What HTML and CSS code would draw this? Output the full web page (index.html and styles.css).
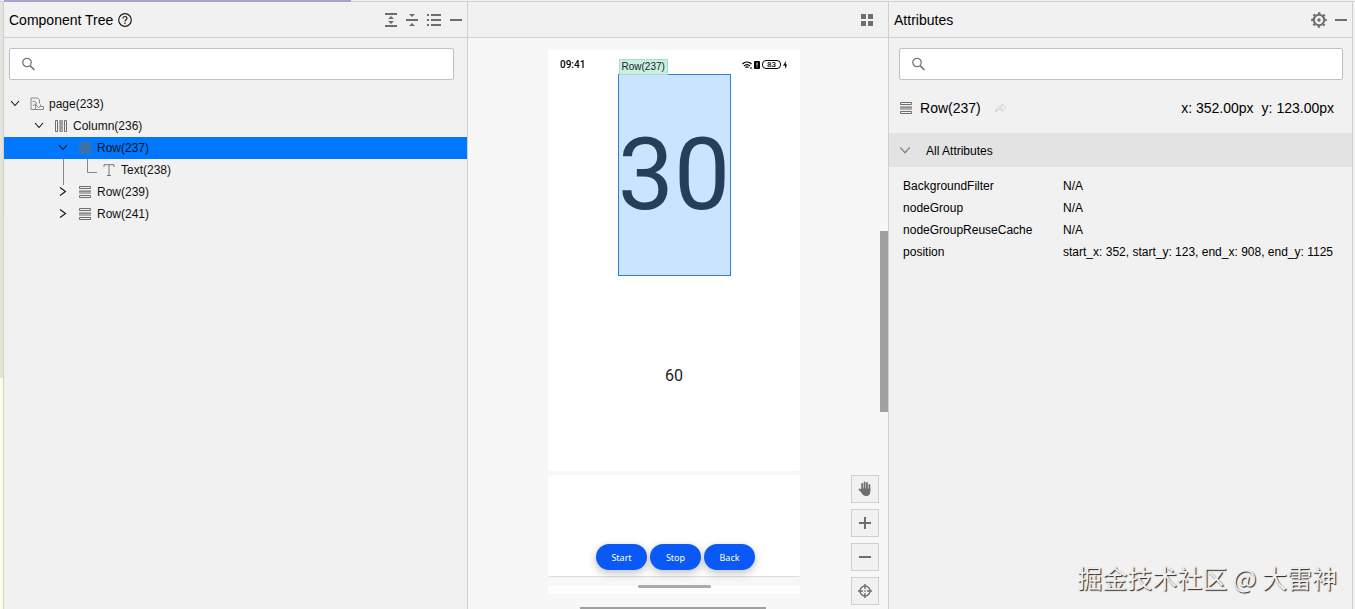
FILE: index.html
```
<!DOCTYPE html>
<html lang="en">
<head>
    <meta charset="utf-8">
    <title>Component Tree</title>
    <meta name="viewport" content="width=device-width, initial-scale=1">
    <link rel="stylesheet" href="styles.css">
</head>
<body>

<!-- shared icons -->
<svg class="sprite" aria-hidden="true">
    <symbol id="search" viewBox="0 0 14 14">
        <circle cx="5" cy="5.500" r="4.200" fill="none" stroke="#777" stroke-width="1.3"/>
        <path d="M8 8.700L12.500 13" stroke="#777" stroke-width="1.7"/>
    </symbol>
    <symbol id="row" viewBox="0 0 12 12">
        <path d="M.5.5h11v2H.5zM.5 9.5h11v2H.5z" fill="none" stroke="#6e6e6e"/>
        <path d="M0 4.5h12v1.2H0zM0 6.4h12v1.2H0z" fill="#6e6e6e"/>
    </symbol>
    <symbol id="down" viewBox="0 0 10 10">
        <path d="M1 2l4 4.500L9 2" fill="none" stroke="currentColor" stroke-width="1.1"/>
    </symbol>
    <symbol id="right" viewBox="0 0 10 10">
        <path d="M2 .5L7.500 4.500 2 8.500" fill="none" stroke="currentColor" stroke-width="1.1"/>
    </symbol>
    <symbol id="minus" viewBox="0 0 12 12">
        <path d="M0 5h12v2H0z" fill="#6e6e6e"/>
    </symbol>
</svg>

<div class="topline"><div class="progress"></div></div>
<div class="window">
    <div class="edge"></div>

    <section class="panel tree-panel">
        <header class="panel-header">
            <h2>Component Tree</h2>
            <button class="icon-btn help" aria-label="Help">
                <svg width="14" height="14" viewBox="0 0 14 14" fill="none" stroke="#222" stroke-width="1.2">
                    <circle cx="7" cy="7" r="6.3"/>
                    <path d="M5 5.5C5 2.9 9 2.9 9 5.3 9 6.8 7 6.8 7 8.5M7 9.5v1.4"/>
                </svg>
            </button>
            <div class="tools">
                <button class="icon-btn" aria-label="Expand all">
                    <svg width="12" height="14" viewBox="0 0 12 14" fill="#6e6e6e">
                        <path d="M0 0h12v2H0zM0 12h12v2H0zM6 3l3 3H3zM6 11L3 8h6z"/>
                    </svg>
                </button>
                <button class="icon-btn" aria-label="Collapse all">
                    <svg width="12" height="14" viewBox="0 0 12 14" fill="#6e6e6e">
                        <path d="M0 6h12v2H0zM3 1h6L6 4zM6 10l3 3H3z"/>
                    </svg>
                </button>
                <button class="icon-btn" aria-label="List">
                    <svg width="14" height="12" viewBox="0 0 14 12" fill="#6e6e6e">
                        <path d="M0 0h2v2H0zM0 5h2v2H0zM0 10h2v2H0zM4 0h10v2H4zM4 5h10v2H4zM4 10h10v2H4z"/>
                    </svg>
                </button>
                <button class="icon-btn" aria-label="Hide component tree">
                    <svg width="12" height="12"><use href="#minus"/></svg>
                </button>
            </div>
        </header>
        <label class="search">
            <svg width="14" height="14"><use href="#search"/></svg>
            <input type="text" aria-label="Search components">
        </label>
        <ul class="tree">
            <li class="node">
                <svg class="arrow" width="10" height="10"><use href="#down"/></svg>
                <svg class="type" width="14" height="14" viewBox="0 0 14 14" fill="none" stroke="#888">
                    <path d="M5 12.500H1V1h6.500L9.500 3v3.500M2.500 4.500c3-.5 4 .5 4 3M3 9c1-2 2.500-2 2.500-2"/>
                    <path d="M5.500 12.500v-5l3 3 2-1V7.500M10.500 9.500h3v3h-8"/>
                </svg>
                page(233)
            </li>
            <li class="node level-1">
                <svg class="arrow" width="10" height="10"><use href="#down"/></svg>
                <svg class="type" width="12" height="12" viewBox="0 0 12 12">
                    <path d="M.5.5h2v11h-2zM9.500.5h2v11h-2z" fill="none" stroke="#6e6e6e"/>
                    <path d="M4.500 0h1.200v12H4.500zM6.400 0h1.200v12H6.400z" fill="#6e6e6e"/>
                </svg>
                Column(236)
            </li>
            <li class="node level-2 selected">
                <svg class="arrow" width="10" height="10"><use href="#down"/></svg>
                <svg class="type" width="12" height="12" viewBox="0 0 12 12">
                    <path d="M0 0h12v12H0z" fill="#2f72b8"/>
                    <path d="M0 .5h12M0 3h12M0 6h12M0 9h12M0 11.500h12" stroke="#4c7294"/>
                </svg>
                Row(237)
            </li>
            <li class="node level-3">
                <svg class="guide" width="34" height="22" viewBox="0 0 34 22" fill="none" stroke="#888">
                    <path d="M.5 0v26M24.500 0v13.500H34"/>
                </svg>
                <svg class="type" width="12" height="12" viewBox="0 0 12 12" fill="none" stroke="#777">
                    <path d="M1 3V.7h10V3M6 .7v10.800M4 11.500h4"/>
                </svg>
                Text(238)
            </li>
            <li class="node level-2">
                <svg class="arrow" width="10" height="10"><use href="#right"/></svg>
                <svg class="type" width="12" height="12"><use href="#row"/></svg>
                Row(239)
            </li>
            <li class="node level-2">
                <svg class="arrow" width="10" height="10"><use href="#right"/></svg>
                <svg class="type" width="12" height="12"><use href="#row"/></svg>
                Row(241)
            </li>
        </ul>
    </section>

    <section class="panel preview-panel">
        <header class="panel-header">
            <div class="tools">
                <button class="icon-btn" aria-label="Layout">
                    <svg width="12" height="12" viewBox="0 0 12 12" fill="#6e6e6e">
                        <path d="M0 0h5v5H0zM7 0h5v5H7zM0 7h5v5H0zM7 7h5v5H7z"/>
                    </svg>
                </button>
            </div>
        </header>
        <div class="canvas">
            <div class="phone">
                <div class="screen">
                    <div class="status">
                        <span>09:41</span>
                        <span class="status-icons">
                            <svg width="10" height="8" viewBox="0 0 10 8" fill="none" stroke="#000" stroke-width="1.200">
                                <path d="M.5 3C3 .3 7 .3 9.500 3M2 5c2-1.800 4-1.800 6 0M3.500 6.500c1-.8 2-.8 3 0"/>
                                <path d="M8 7h2"/>
                            </svg>
                            <svg width="6" height="8" viewBox="0 0 6 8">
                                <rect width="6" height="8" rx="1"/>
                                <path d="M3 1.500v3M3 5.500v1" stroke="#fff"/>
                            </svg>
                            <span class="battery">83</span>
                            <svg width="4" height="8" viewBox="0 0 4 8"><path d="M3 0L0 4.500h2L2.500 8 4 3.500H2.500z"/></svg>
                        </span>
                    </div>
                    <div class="picked">
                        <span class="tag">Row(237)</span>
                        30
                    </div>
                    <div class="counter">60</div>
                </div>
                <div class="screen actions">
                    <button>Start</button>
                    <button>Stop</button>
                    <button>Back</button>
                </div>
                <div class="home"><div class="home-bar"></div></div>
            </div>
            <div class="scroll-y"></div>
            <div class="scroll-x"></div>
            <div class="zoom-bar">
                <button aria-label="Pan">
                    <svg width="14" height="16" viewBox="0 0 14 16" fill="none" stroke="#6e6e6e" stroke-width="1.800" stroke-linecap="round">
                        <path d="M4.200 8V3M6.600 8V1.500M9 8V2M11.400 9V4M4.500 11L1.500 8.500"/>
                        <path d="M3.300 7.500h9v3c0 3-1.500 4.500-4 4.500S4.500 14 2.800 10.500z" fill="#6e6e6e" stroke="none"/>
                    </svg>
                </button>
                <button aria-label="Zoom in">
                    <svg width="12" height="12" viewBox="0 0 12 12" fill="#6e6e6e"><path d="M0 5h5V0h2v5h5v2H7v5H5V7H0z"/></svg>
                </button>
                <button aria-label="Zoom out">
                    <svg width="12" height="12"><use href="#minus"/></svg>
                </button>
                <button aria-label="Center">
                    <svg width="14" height="14" viewBox="0 0 14 14" fill="none" stroke="#6e6e6e" stroke-width="1.400">
                        <circle cx="7" cy="7" r="5"/>
                        <path d="M7 0v5M7 9v5M0 7h5M9 7h5M6.300 7h1.400"/>
                    </svg>
                </button>
            </div>
        </div>
    </section>

    <section class="panel attr-panel">
        <header class="panel-header">
            <h2>Attributes</h2>
            <div class="tools">
                <button class="icon-btn" aria-label="Settings">
                    <svg width="16" height="16" viewBox="0 0 16 16" fill="none" stroke="#6e6e6e">
                        <circle cx="8" cy="8" r="5.200" stroke-width="2"/>
                        <circle cx="8" cy="8" r="6.900" stroke-width="1.800" stroke-dasharray="2.400 3.020" stroke-dashoffset="1.200"/>
                        <circle cx="8" cy="8" r="1.700" fill="#6e6e6e" stroke="none"/>
                    </svg>
                </button>
                <button class="icon-btn" aria-label="Hide attributes">
                    <svg width="12" height="12"><use href="#minus"/></svg>
                </button>
            </div>
        </header>
        <label class="search">
            <svg width="14" height="14"><use href="#search"/></svg>
            <input type="text" aria-label="Search attributes">
        </label>
        <div class="summary">
            <svg width="12" height="12"><use href="#row"/></svg>
            <span>Row(237)</span>
            <svg class="jump" width="12" height="10" viewBox="0 0 12 10" fill="none" stroke="#d2d2d2">
                <path d="M7 3V.8L11.300 4.500 7 8.200V6C4 6 2 7 .6 9 1 5.500 3.500 3 7 3zM1 8l6-3.500"/>
            </svg>
            <span class="pos">x: 352.00px</span>
            <span>y: 123.00px</span>
        </div>
        <div class="group">
            <svg width="12" height="12"><use href="#down"/></svg>
            All Attributes
        </div>
        <table class="attrs">
            <tr><th scope="row">BackgroundFilter</th><td>N/A</td></tr>
            <tr><th scope="row">nodeGroup</th><td>N/A</td></tr>
            <tr><th scope="row">nodeGroupReuseCache</th><td>N/A</td></tr>
            <tr><th scope="row">position</th><td>start_x: 352, start_y: 123, end_x: 908, end_y: 1125</td></tr>
        </table>
    </section>
</div>
<div class="watermark">掘金技术社区 @ 大雷神</div>

</body>
</html>
```
FILE: styles.css
```
* {
    box-sizing: border-box;
}

body {
    display: flex;
    flex-direction: column;
    height: 100vh;
    margin: 0;
    overflow: hidden;
    background: #f1f1f1;
    color: #000;
    font-family: "Liberation Sans", Arial, sans-serif;
    font-size: 12px;
}

svg {
    flex: none;
    display: block;
}

button {
    font-family: inherit;
    cursor: pointer;
}

.sprite {
    position: absolute;
    width: 0;
    height: 0;
}

.topline {
    flex: none;
    height: 2px;
    padding-left: 4px;
    border-bottom: 1px solid #d0d0d0;
}

.progress {
    width: 347px;
    max-width: 100%;
    height: 2px;
    background: #a5a5c8;
}

.window {
    flex: 1;
    display: flex;
    min-height: 0;
    padding-right: 2px;
}

.edge {
    width: 4px;
    border-right: 1px solid #d0d0d0;
    background: linear-gradient(#e4e4e0, #e4e4d0 62%, #fdfde6 62%);
}

/* panels */
.panel {
    display: flex;
    flex-direction: column;
    min-width: 0;
    border-right: 1px solid #cfcfcf;
}

.tree-panel,
.attr-panel {
    flex: 464 1 0;
}

.preview-panel {
    flex: 421 1 0;
}

.panel-header {
    flex: none;
    display: flex;
    align-items: center;
    height: 36px;
    padding: 0 5px;
    border-bottom: 1px solid #cfcfcf;
}

.panel-header h2 {
    margin: 0;
    font-size: 14px;
    font-weight: normal;
}

.preview-panel .panel-header {
    padding-right: 15px;
}

.tools {
    display: flex;
    align-items: center;
    gap: 9px;
    margin-left: auto;
}

.attr-panel .tools {
    gap: 8px;
}

.icon-btn {
    padding: 0;
    border: 0;
    background: none;
}

.help {
    margin-left: 5px;
}

/* search box */
.search {
    flex: none;
    display: flex;
    align-items: center;
    gap: 8px;
    height: 32px;
    margin: 10px 13px 0 5px;
    padding: 0 12px;
    border: 1px solid #c0c0c0;
    border-radius: 2px;
    background: #fff;
}

.search input {
    flex: 1;
    min-width: 0;
    border: 0;
    outline: 0;
    font-size: 12px;
}

.attr-panel .search {
    margin: 10px 9px 0 10px;
}

/* tree */
.tree {
    margin: 13px 0 0;
    padding: 0;
    list-style: none;
}

.node {
    display: flex;
    align-items: center;
    height: 22px;
    padding-left: 6px;
    color: #111;
}

.arrow {
    margin-right: 10px;
}

.type {
    width: 14px;
    margin-right: 5px;
}

.level-1 {
    padding-left: 30px;
}

.level-2 {
    padding-left: 54px;
}

.level-3 {
    padding-left: 59px;
}

.guide {
    margin-right: 5px;
    overflow: visible;
}

.selected {
    background: #0077ff;
}

/* preview */
.canvas {
    flex: 1;
    position: relative;
    min-height: 0;
    padding: 12px 8px 0 0;
    background: #f7f7f7;
}

.phone {
    width: 252px;
    margin: 0 auto;
    font-family: Roboto, sans-serif;
}

.screen {
    display: flex;
    flex-direction: column;
    align-items: center;
    height: 421px;
    border-radius: 2px;
    background: #fff;
}

.status {
    align-self: stretch;
    display: flex;
    align-items: center;
    justify-content: space-between;
    height: 24px;
    padding: 5px 13px 0 12px;
    font-size: 10px;
    font-weight: 500;
}

.status-icons {
    display: flex;
    align-items: center;
    gap: 2px;
}

.battery {
    padding: 0 4px;
    border: 1px solid #000;
    border-radius: 4px;
    font-size: 8px;
    line-height: 7px;
}

.picked {
    position: relative;
    width: 113px;
    height: 202px;
    border: 1px solid #2f80d0;
    background: #cae4ff;
    color: #243f5a;
    font-size: 100px;
    line-height: 200px;
    display: flex;
    justify-content: center;
}

.tag {
    position: absolute;
    left: 0;
    bottom: 100%;
    padding: 0 2px;
    border: 1px solid #a9dcc8;
    background: #c8f0e0;
    color: #222;
    font-family: "Liberation Sans", Arial, sans-serif;
    font-size: 10px;
    line-height: 14px;
}

.counter {
    margin: auto 0;
    padding-top: 4px;
    color: #222;
    font-size: 16px;
}

.actions {
    flex-direction: row;
    align-items: flex-end;
    justify-content: center;
    gap: 3px;
    height: 102px;
    margin-top: 4px;
    padding: 0 0 6px 3px;
    border-bottom: 1px solid #dcdcdc;
}

.actions button {
    width: 51px;
    height: 26px;
    padding: 0;
    border: 0;
    border-radius: 13px;
    background: #0a59f7;
    box-shadow: 0 3px 8px rgba(0, 0, 0, .25);
    color: #fff;
    font-family: "Noto Sans", sans-serif;
    font-size: 9px;
}

.home {
    height: 17px;
    padding-top: 8px;
    background: linear-gradient(#f7f7f7 50%, #fdfdfd 50%);
}

.home-bar {
    width: 73px;
    height: 3px;
    margin: 0 auto;
    border-radius: 2px;
    background: #aaa;
}

.scroll-y {
    position: absolute;
    top: 193px;
    right: 0;
    width: 8px;
    height: 181px;
    background: #a0a0a0;
}

.scroll-x {
    position: absolute;
    bottom: 0;
    left: 112px;
    width: 186px;
    height: 2px;
    background: #a0a0a0;
}

.zoom-bar {
    position: absolute;
    right: 9px;
    bottom: 4px;
    display: grid;
    gap: 6px;
}

.zoom-bar button {
    display: grid;
    place-items: center;
    width: 28px;
    height: 28px;
    padding: 0;
    border: 1px solid #cfcfcf;
    background: #f1f1f1;
}

/* attributes */
.summary {
    display: flex;
    align-items: center;
    gap: 8px;
    height: 53px;
    padding: 3px 18px 0 11px;
    font-size: 14px;
}

.jump {
    margin-left: 6px;
}

.pos {
    margin-left: auto;
}

.group {
    display: flex;
    align-items: center;
    gap: 15px;
    height: 34px;
    padding: 2px 0 0 10px;
    background: #e3e3e3;
}

.group svg {
    color: #808080;
}

.attrs {
    margin: 8px 0 0 14px;
    border-collapse: collapse;
    line-height: 22px;
}

.attrs th,
.attrs td {
    padding: 0;
    font-weight: normal;
    text-align: left;
    white-space: nowrap;
}

.attrs th {
    width: 160px;
}

.watermark {
    position: absolute;
    right: 18px;
    bottom: 14px;
    color: #eee;
    font-family: "Noto Sans CJK SC", sans-serif;
    font-size: 25px;
    line-height: 36px;
    text-shadow: 1px 1px 1px #222;
}
```
